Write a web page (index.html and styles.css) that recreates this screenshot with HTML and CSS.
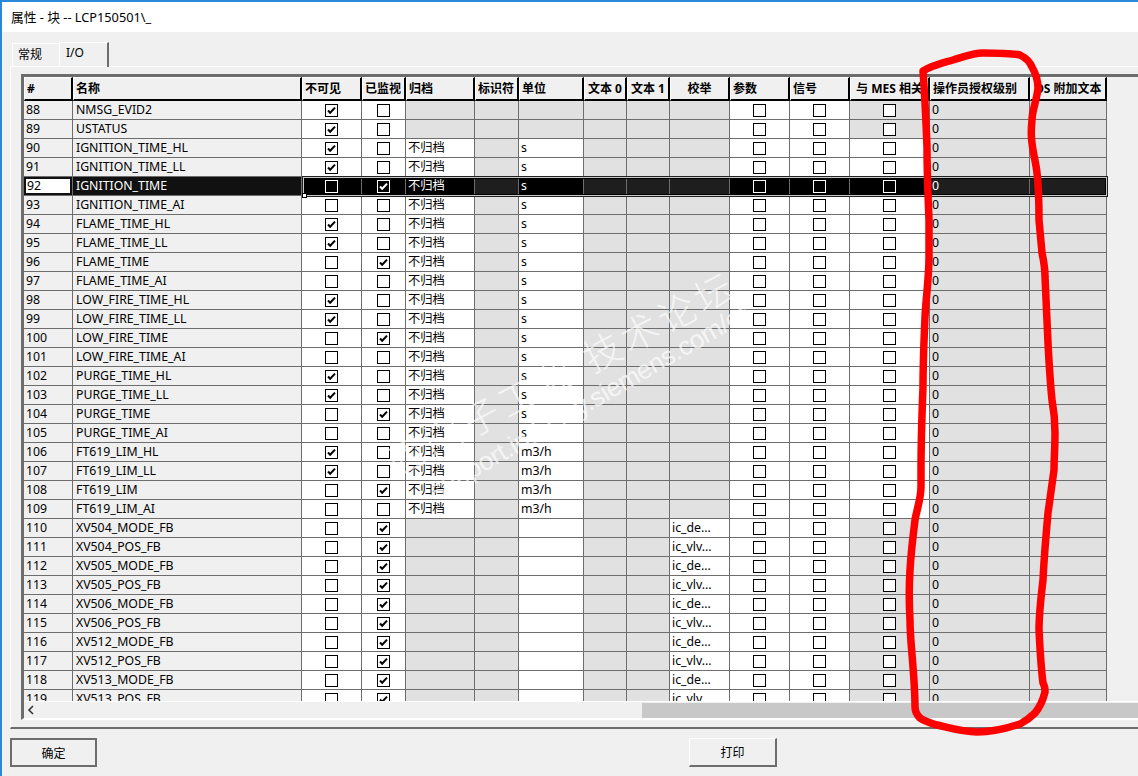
FILE: index.html
```html
<!DOCTYPE html>
<html lang="zh-CN">
<head>
    <meta charset="UTF-8">
    <title>属性 - 块 -- LCP150501\_</title>
    <link rel="stylesheet" href="styles.css">
</head>
<body>
    <div class="window">
        <div class="title-bar">属性 - 块 -- LCP150501\_</div>
        <div class="tabs">
            <div class="tab">常规</div>
            <div class="tab active">I/O</div>
        </div>
        <div class="pane">
            <div class="grid-frame">
                <div class="grid-scroll">
                    <table class="grid">
                        <colgroup>
                            <col class="w-num"><col class="w-name"><col class="w-60"><col class="w-44"><col class="w-69">
                            <col class="w-44"><col class="w-65"><col class="w-43"><col class="w-43"><col class="w-60">
                            <col class="w-60"><col class="w-60"><col class="w-80"><col class="w-100"><col class="w-77">
                        </colgroup>
                        <thead>
                            <tr>
                                <th>#</th><th>名称</th><th>不可见</th><th>已监视</th><th>归档</th><th>标识符</th><th>单位</th>
                                <th class="mid">文本 0</th><th class="mid">文本 1</th><th class="mid">校举</th><th>参数</th><th>信号</th>
                                <th class="mid">与 MES 相关</th><th>操作员授权级别</th><th class="mid">OS 附加文本</th>
                            </tr>
                        </thead>
                        <tbody>
                            <tr><td class="n">88</td><td class="n">NMSG_EVID2</td><td class="c"><i class="chk on"></i></td><td class="c"><i class="chk"></i></td><td class="g"></td><td class="g"></td><td class="g"></td><td class="g"></td><td class="g"></td><td class="g"></td><td class="c"><i class="chk"></i></td><td class="c"><i class="chk"></i></td><td class="c g"><i class="chk"></i></td><td class="g">0</td><td class="g"></td></tr>
                            <tr><td class="n">89</td><td class="n">USTATUS</td><td class="c"><i class="chk on"></i></td><td class="c"><i class="chk"></i></td><td class="g"></td><td class="g"></td><td class="g"></td><td class="g"></td><td class="g"></td><td class="g"></td><td class="c"><i class="chk"></i></td><td class="c"><i class="chk"></i></td><td class="c g"><i class="chk"></i></td><td class="g">0</td><td class="g"></td></tr>
                            <tr><td class="n">90</td><td class="n">IGNITION_TIME_HL</td><td class="c"><i class="chk on"></i></td><td class="c"><i class="chk"></i></td><td>不归档</td><td class="g"></td><td>s</td><td class="g"></td><td class="g"></td><td class="g"></td><td class="c"><i class="chk"></i></td><td class="c"><i class="chk"></i></td><td class="c"><i class="chk"></i></td><td class="g">0</td><td class="g"></td></tr>
                            <tr><td class="n">91</td><td class="n">IGNITION_TIME_LL</td><td class="c"><i class="chk on"></i></td><td class="c"><i class="chk"></i></td><td>不归档</td><td class="g"></td><td>s</td><td class="g"></td><td class="g"></td><td class="g"></td><td class="c"><i class="chk"></i></td><td class="c"><i class="chk"></i></td><td class="c"><i class="chk"></i></td><td class="g">0</td><td class="g"></td></tr>
                            <tr class="sel"><td class="n cur"><span>92</span></td><td class="n">IGNITION_TIME</td><td class="c"><i class="chk"></i></td><td class="c"><i class="chk on"></i></td><td>不归档</td><td class="g"></td><td>s</td><td class="g"></td><td class="g"></td><td class="g"></td><td class="c"><i class="chk"></i></td><td class="c"><i class="chk"></i></td><td class="c"><i class="chk"></i></td><td class="g">0</td><td class="g"></td></tr>
                            <tr><td class="n">93</td><td class="n">IGNITION_TIME_AI</td><td class="c"><i class="chk"></i></td><td class="c"><i class="chk"></i></td><td>不归档</td><td class="g"></td><td>s</td><td class="g"></td><td class="g"></td><td class="g"></td><td class="c"><i class="chk"></i></td><td class="c"><i class="chk"></i></td><td class="c"><i class="chk"></i></td><td class="g">0</td><td class="g"></td></tr>
                            <tr><td class="n">94</td><td class="n">FLAME_TIME_HL</td><td class="c"><i class="chk on"></i></td><td class="c"><i class="chk"></i></td><td>不归档</td><td class="g"></td><td>s</td><td class="g"></td><td class="g"></td><td class="g"></td><td class="c"><i class="chk"></i></td><td class="c"><i class="chk"></i></td><td class="c"><i class="chk"></i></td><td class="g">0</td><td class="g"></td></tr>
                            <tr><td class="n">95</td><td class="n">FLAME_TIME_LL</td><td class="c"><i class="chk on"></i></td><td class="c"><i class="chk"></i></td><td>不归档</td><td class="g"></td><td>s</td><td class="g"></td><td class="g"></td><td class="g"></td><td class="c"><i class="chk"></i></td><td class="c"><i class="chk"></i></td><td class="c"><i class="chk"></i></td><td class="g">0</td><td class="g"></td></tr>
                            <tr><td class="n">96</td><td class="n">FLAME_TIME</td><td class="c"><i class="chk"></i></td><td class="c"><i class="chk on"></i></td><td>不归档</td><td class="g"></td><td>s</td><td class="g"></td><td class="g"></td><td class="g"></td><td class="c"><i class="chk"></i></td><td class="c"><i class="chk"></i></td><td class="c"><i class="chk"></i></td><td class="g">0</td><td class="g"></td></tr>
                            <tr><td class="n">97</td><td class="n">FLAME_TIME_AI</td><td class="c"><i class="chk"></i></td><td class="c"><i class="chk"></i></td><td>不归档</td><td class="g"></td><td>s</td><td class="g"></td><td class="g"></td><td class="g"></td><td class="c"><i class="chk"></i></td><td class="c"><i class="chk"></i></td><td class="c"><i class="chk"></i></td><td class="g">0</td><td class="g"></td></tr>
                            <tr><td class="n">98</td><td class="n">LOW_FIRE_TIME_HL</td><td class="c"><i class="chk on"></i></td><td class="c"><i class="chk"></i></td><td>不归档</td><td class="g"></td><td>s</td><td class="g"></td><td class="g"></td><td class="g"></td><td class="c"><i class="chk"></i></td><td class="c"><i class="chk"></i></td><td class="c"><i class="chk"></i></td><td class="g">0</td><td class="g"></td></tr>
                            <tr><td class="n">99</td><td class="n">LOW_FIRE_TIME_LL</td><td class="c"><i class="chk on"></i></td><td class="c"><i class="chk"></i></td><td>不归档</td><td class="g"></td><td>s</td><td class="g"></td><td class="g"></td><td class="g"></td><td class="c"><i class="chk"></i></td><td class="c"><i class="chk"></i></td><td class="c"><i class="chk"></i></td><td class="g">0</td><td class="g"></td></tr>
                            <tr><td class="n">100</td><td class="n">LOW_FIRE_TIME</td><td class="c"><i class="chk"></i></td><td class="c"><i class="chk on"></i></td><td>不归档</td><td class="g"></td><td>s</td><td class="g"></td><td class="g"></td><td class="g"></td><td class="c"><i class="chk"></i></td><td class="c"><i class="chk"></i></td><td class="c"><i class="chk"></i></td><td class="g">0</td><td class="g"></td></tr>
                            <tr><td class="n">101</td><td class="n">LOW_FIRE_TIME_AI</td><td class="c"><i class="chk"></i></td><td class="c"><i class="chk"></i></td><td>不归档</td><td class="g"></td><td>s</td><td class="g"></td><td class="g"></td><td class="g"></td><td class="c"><i class="chk"></i></td><td class="c"><i class="chk"></i></td><td class="c"><i class="chk"></i></td><td class="g">0</td><td class="g"></td></tr>
                            <tr><td class="n">102</td><td class="n">PURGE_TIME_HL</td><td class="c"><i class="chk on"></i></td><td class="c"><i class="chk"></i></td><td>不归档</td><td class="g"></td><td>s</td><td class="g"></td><td class="g"></td><td class="g"></td><td class="c"><i class="chk"></i></td><td class="c"><i class="chk"></i></td><td class="c"><i class="chk"></i></td><td class="g">0</td><td class="g"></td></tr>
                            <tr><td class="n">103</td><td class="n">PURGE_TIME_LL</td><td class="c"><i class="chk on"></i></td><td class="c"><i class="chk"></i></td><td>不归档</td><td class="g"></td><td>s</td><td class="g"></td><td class="g"></td><td class="g"></td><td class="c"><i class="chk"></i></td><td class="c"><i class="chk"></i></td><td class="c"><i class="chk"></i></td><td class="g">0</td><td class="g"></td></tr>
                            <tr><td class="n">104</td><td class="n">PURGE_TIME</td><td class="c"><i class="chk"></i></td><td class="c"><i class="chk on"></i></td><td>不归档</td><td class="g"></td><td>s</td><td class="g"></td><td class="g"></td><td class="g"></td><td class="c"><i class="chk"></i></td><td class="c"><i class="chk"></i></td><td class="c"><i class="chk"></i></td><td class="g">0</td><td class="g"></td></tr>
                            <tr><td class="n">105</td><td class="n">PURGE_TIME_AI</td><td class="c"><i class="chk"></i></td><td class="c"><i class="chk"></i></td><td>不归档</td><td class="g"></td><td>s</td><td class="g"></td><td class="g"></td><td class="g"></td><td class="c"><i class="chk"></i></td><td class="c"><i class="chk"></i></td><td class="c"><i class="chk"></i></td><td class="g">0</td><td class="g"></td></tr>
                            <tr><td class="n">106</td><td class="n">FT619_LIM_HL</td><td class="c"><i class="chk on"></i></td><td class="c"><i class="chk"></i></td><td>不归档</td><td class="g"></td><td>m3/h</td><td class="g"></td><td class="g"></td><td class="g"></td><td class="c"><i class="chk"></i></td><td class="c"><i class="chk"></i></td><td class="c"><i class="chk"></i></td><td class="g">0</td><td class="g"></td></tr>
                            <tr><td class="n">107</td><td class="n">FT619_LIM_LL</td><td class="c"><i class="chk on"></i></td><td class="c"><i class="chk"></i></td><td>不归档</td><td class="g"></td><td>m3/h</td><td class="g"></td><td class="g"></td><td class="g"></td><td class="c"><i class="chk"></i></td><td class="c"><i class="chk"></i></td><td class="c"><i class="chk"></i></td><td class="g">0</td><td class="g"></td></tr>
                            <tr><td class="n">108</td><td class="n">FT619_LIM</td><td class="c"><i class="chk"></i></td><td class="c"><i class="chk on"></i></td><td>不归档</td><td class="g"></td><td>m3/h</td><td class="g"></td><td class="g"></td><td class="g"></td><td class="c"><i class="chk"></i></td><td class="c"><i class="chk"></i></td><td class="c"><i class="chk"></i></td><td class="g">0</td><td class="g"></td></tr>
                            <tr><td class="n">109</td><td class="n">FT619_LIM_AI</td><td class="c"><i class="chk"></i></td><td class="c"><i class="chk"></i></td><td>不归档</td><td class="g"></td><td>m3/h</td><td class="g"></td><td class="g"></td><td class="g"></td><td class="c"><i class="chk"></i></td><td class="c"><i class="chk"></i></td><td class="c"><i class="chk"></i></td><td class="g">0</td><td class="g"></td></tr>
                            <tr><td class="n">110</td><td class="n">XV504_MODE_FB</td><td class="c"><i class="chk"></i></td><td class="c"><i class="chk on"></i></td><td class="g"></td><td class="g"></td><td></td><td class="g"></td><td class="g"></td><td>ic_de...</td><td class="c"><i class="chk"></i></td><td class="c"><i class="chk"></i></td><td class="c g"><i class="chk"></i></td><td class="g">0</td><td class="g"></td></tr>
                            <tr><td class="n">111</td><td class="n">XV504_POS_FB</td><td class="c"><i class="chk"></i></td><td class="c"><i class="chk on"></i></td><td class="g"></td><td class="g"></td><td></td><td class="g"></td><td class="g"></td><td>ic_vlv...</td><td class="c"><i class="chk"></i></td><td class="c"><i class="chk"></i></td><td class="c g"><i class="chk"></i></td><td class="g">0</td><td class="g"></td></tr>
                            <tr><td class="n">112</td><td class="n">XV505_MODE_FB</td><td class="c"><i class="chk"></i></td><td class="c"><i class="chk on"></i></td><td class="g"></td><td class="g"></td><td></td><td class="g"></td><td class="g"></td><td>ic_de...</td><td class="c"><i class="chk"></i></td><td class="c"><i class="chk"></i></td><td class="c g"><i class="chk"></i></td><td class="g">0</td><td class="g"></td></tr>
                            <tr><td class="n">113</td><td class="n">XV505_POS_FB</td><td class="c"><i class="chk"></i></td><td class="c"><i class="chk on"></i></td><td class="g"></td><td class="g"></td><td></td><td class="g"></td><td class="g"></td><td>ic_vlv...</td><td class="c"><i class="chk"></i></td><td class="c"><i class="chk"></i></td><td class="c g"><i class="chk"></i></td><td class="g">0</td><td class="g"></td></tr>
                            <tr><td class="n">114</td><td class="n">XV506_MODE_FB</td><td class="c"><i class="chk"></i></td><td class="c"><i class="chk on"></i></td><td class="g"></td><td class="g"></td><td></td><td class="g"></td><td class="g"></td><td>ic_de...</td><td class="c"><i class="chk"></i></td><td class="c"><i class="chk"></i></td><td class="c g"><i class="chk"></i></td><td class="g">0</td><td class="g"></td></tr>
                            <tr><td class="n">115</td><td class="n">XV506_POS_FB</td><td class="c"><i class="chk"></i></td><td class="c"><i class="chk on"></i></td><td class="g"></td><td class="g"></td><td></td><td class="g"></td><td class="g"></td><td>ic_vlv...</td><td class="c"><i class="chk"></i></td><td class="c"><i class="chk"></i></td><td class="c g"><i class="chk"></i></td><td class="g">0</td><td class="g"></td></tr>
                            <tr><td class="n">116</td><td class="n">XV512_MODE_FB</td><td class="c"><i class="chk"></i></td><td class="c"><i class="chk on"></i></td><td class="g"></td><td class="g"></td><td></td><td class="g"></td><td class="g"></td><td>ic_de...</td><td class="c"><i class="chk"></i></td><td class="c"><i class="chk"></i></td><td class="c g"><i class="chk"></i></td><td class="g">0</td><td class="g"></td></tr>
                            <tr><td class="n">117</td><td class="n">XV512_POS_FB</td><td class="c"><i class="chk"></i></td><td class="c"><i class="chk on"></i></td><td class="g"></td><td class="g"></td><td></td><td class="g"></td><td class="g"></td><td>ic_vlv...</td><td class="c"><i class="chk"></i></td><td class="c"><i class="chk"></i></td><td class="c g"><i class="chk"></i></td><td class="g">0</td><td class="g"></td></tr>
                            <tr><td class="n">118</td><td class="n">XV513_MODE_FB</td><td class="c"><i class="chk"></i></td><td class="c"><i class="chk on"></i></td><td class="g"></td><td class="g"></td><td></td><td class="g"></td><td class="g"></td><td>ic_de...</td><td class="c"><i class="chk"></i></td><td class="c"><i class="chk"></i></td><td class="c g"><i class="chk"></i></td><td class="g">0</td><td class="g"></td></tr>
                            <tr><td class="n">119</td><td class="n">XV513_POS_FB</td><td class="c"><i class="chk"></i></td><td class="c"><i class="chk on"></i></td><td class="g"></td><td class="g"></td><td></td><td class="g"></td><td class="g"></td><td>ic_vlv...</td><td class="c"><i class="chk"></i></td><td class="c"><i class="chk"></i></td><td class="c g"><i class="chk"></i></td><td class="g">0</td><td class="g"></td></tr>
                        </tbody>
                    </table>
                    <div class="sel-box"></div>
                    <div class="sel-handle"></div>
                </div>
                <div class="scrollbar">
                    <svg class="arrow" width="8" height="10" viewBox="0 0 8 10"><path d="M6 1 2 5l4 4" fill="none" stroke="#333" stroke-width="1.6"/></svg>
                    <div class="thumb"></div>
                </div>
            </div>
        </div>
        <div class="footer">
            <button class="btn default">确定</button>
            <button class="btn">打印</button>
        </div>
    </div>

    <!-- forum watermark and the red marker loop drawn over the screenshot -->
    <svg class="overlay" width="1138" height="776" viewBox="0 0 1138 776">
        <text class="wm-cn" x="396" y="478" transform="rotate(-28 396 478)">西门子工业 技术论坛</text>
        <text class="wm-url" x="436" y="500" textLength="366" transform="rotate(-30 436 500)">support.industry.siemens.com/cs</text>
        <path class="marker" d="M923 71 C933 65 943 63 953 60 C963 57 973 53 983 53 C998 53 1010 53 1020 55 C1026 58 1030 62 1032 67 C1036 74 1038 80 1038 88 C1037 100 1032 110 1032 120 C1031 130 1031 137 1032 143 C1033 153 1036 163 1037 173 C1039 190 1039 205 1039 220 C1040 232 1041 243 1042 253 C1044 262 1045 270 1045 277 C1046 300 1047 322 1048 343 C1049 362 1050 381 1052 400 C1054 411 1055 422 1055 433 C1055 447 1054 460 1054 470 C1052 485 1050 499 1048 513 C1046 535 1044 558 1043 580 C1041 597 1039 613 1039 630 C1040 650 1041 668 1043 683 C1045 686 1045 689 1045 692 C1043 700 1040 707 1035 713 C1030 718 1026 721 1020 724 C1005 729 992 732 977 732 C962 732 950 728 937 725 C930 723 924 721 920 718 C917 715 915 711 915 707 C915 693 914 680 913 667 C912 652 910 636 910 620 C909 603 909 586 910 570 C911 553 913 536 915 520 C917 509 921 498 921 487 L921 470 C921 440 922 413 923 387 C923 363 924 340 925 317 C926 297 929 277 929 257 L929 220 C928 196 927 171 927 147 C926 122 925 97 923 71 Z"/>
    </svg>
</body>
</html>
```

FILE: styles.css
```css
* {
    box-sizing: border-box;
}
body {
    margin: 0;
    width: 1138px;
    height: 776px;
    overflow: hidden;
    position: relative;
    font-family: "Noto Sans", "Noto Sans CJK SC", sans-serif;
    font-size: 12px;
    color: #000;
    background-color: #f0f0f0;
}
.window {
    height: 776px;
    display: flex;
    flex-direction: column;
    border-top: 2px solid #2b88d8;
    border-left: 2px solid #2b88d8;
}
.title-bar {
    height: 30px;
    padding-left: 9px;
    font-size: 12.75px;
    line-height: 30px;
    background-color: #fff;
}
.tabs {
    height: 34px;
    padding-left: 10px;
    display: flex;
    align-items: flex-end;
}
.tab {
    width: 47px;
    height: 23px;
    padding: 1px 0 0 5px;
    border-top: 1px solid #fff;
    border-left: 1px solid #fff;
}
.tab.active {
    width: 50px;
    height: 25px;
    padding-left: 6px;
    border-right: 2px solid #6d6d6d;
    position: relative;
    top: 1px;
}
.pane {
    height: 663px;
    margin-left: 8px;
    padding: 7px 0 0 10px;
    border-top: 1px solid #fff;
    border-left: 1px solid #fff;
    border-bottom: 2px solid #6d6d6d;
}
.grid-frame {
    height: 646px;
    border-top: 3px solid #6d6d6d;
    border-left: 3px solid #6d6d6d;
    border-bottom: 2px solid #fff;
}
.grid-scroll {
    height: 624px;
    overflow: hidden;
    position: relative;
}
.grid {
    width: 1083px;
    table-layout: fixed;
    border-collapse: separate;
    border-spacing: 0;
}
.w-num { width: 49px; }
.w-name { width: 229px; }
.w-60 { width: 60px; }
.w-44 { width: 44px; }
.w-69 { width: 69px; }
.w-65 { width: 65px; }
.w-43 { width: 43px; }
.w-80 { width: 80px; }
.w-100 { width: 100px; }
.w-77 { width: 77px; }
.grid th {
    height: 24px;
    padding: 0 0 1px 2px;
    text-align: left;
    font-weight: bold;
    white-space: nowrap;
    overflow: hidden;
    background-color: #f0f0f0;
    border-top: 1px solid #fff;
    border-left: 1px solid #fff;
    border-right: 2px solid #000;
    border-bottom: 2px solid #000;
}
.grid th.mid {
    text-align: center;
    padding-left: 0;
}
.grid td {
    height: 19px;
    padding: 0 0 0 2px;
    font-size: 12.3px;
    line-height: 18px;
    white-space: nowrap;
    overflow: hidden;
    background-color: #fff;
    border-right: 1px solid #6d6d6d;
    border-bottom: 1px solid #6d6d6d;
}
.grid td.n {
    background-color: #f0f0f0;
}
.grid td.n + td.n {
    padding-left: 3px;
}
.grid td.g {
    background-color: #e1e1e1;
}
.grid td.c {
    padding: 0;
    text-align: center;
}
.chk {
    display: inline-block;
    width: 13px;
    height: 13px;
    vertical-align: middle;
    border: 1px solid #000;
    background-color: #fff;
}
.chk.on {
    background: #fff url("data:image/svg+xml,%3Csvg xmlns='http://www.w3.org/2000/svg' width='11' height='11'%3E%3Cpath d='M2 5.5l2.2 2.3L9 2.6' fill='none' stroke='%23000' stroke-width='2'/%3E%3C/svg%3E") center no-repeat;
}

/* selected row */
.grid .sel td {
    color: #fff;
    background-color: #000;
}
.grid .sel td.n {
    background-color: #111;
}
.grid .sel td.g {
    background-color: #1e1e1e;
}
.grid .sel td.cur {
    padding: 2px;
    color: #000;
}
.cur span {
    display: block;
    height: 14px;
    line-height: 14px;
    padding-left: 1px;
    background-color: #fff;
}
.sel .chk {
    border-color: #fff;
    background-color: #000;
}
.sel .chk.on {
    background: #000 url("data:image/svg+xml,%3Csvg xmlns='http://www.w3.org/2000/svg' width='11' height='11'%3E%3Cpath d='M2 5.5l2.2 2.3L9 2.6' fill='none' stroke='%23fff' stroke-width='2'/%3E%3C/svg%3E") center no-repeat;
}
.sel-box {
    position: absolute;
    left: 278px;
    top: 99px;
    width: 806px;
    height: 21px;
    border: 1px solid #222;
    box-shadow: inset 0 0 0 1px #c8c8c8, inset 0 0 0 2px #000;
}
.sel-handle {
    position: absolute;
    left: 278px;
    top: 116px;
    width: 5px;
    height: 5px;
    border: 1px solid #000;
    background-color: #fff;
}

.scrollbar {
    height: 16px;
    display: flex;
    align-items: center;
    padding-top: 1px;
    border-top: 1px solid #fff;
}
.arrow {
    margin-left: 3px;
}
.thumb {
    height: 15px;
    width: 496px;
    margin-left: auto;
    background-color: #c8c8c8;
}
.footer {
    flex: 1;
    padding: 9px 0 0 8px;
    display: flex;
    align-items: flex-start;
    gap: 592px;
}
.btn {
    width: 88px;
    height: 29px;
    padding: 0;
    font-family: inherit;
    font-size: 12px;
    color: #000;
    background-color: #f0f0f0;
    border-top: 1px solid #fff;
    border-left: 1px solid #fff;
    border-right: 2px solid #6d6d6d;
    border-bottom: 2px solid #6d6d6d;
}
.btn.default {
    width: 87px;
    border: 2px solid #6d6d6d;
}

.overlay {
    position: absolute;
    left: 0;
    top: 0;
    pointer-events: none;
}
.wm-cn {
    font-family: "Noto Sans CJK SC", sans-serif;
    font-size: 38px;
    font-weight: 300;
    letter-spacing: 4px;
    fill: #fff;
    fill-opacity: 0.7;
}
.wm-url {
    font-family: "Liberation Sans", sans-serif;
    font-size: 26px;
    fill: #fff;
    fill-opacity: 0.7;
}
.marker {
    fill: none;
    stroke: #ff0000;
    stroke-width: 7.5;
    stroke-linejoin: round;
}
```
